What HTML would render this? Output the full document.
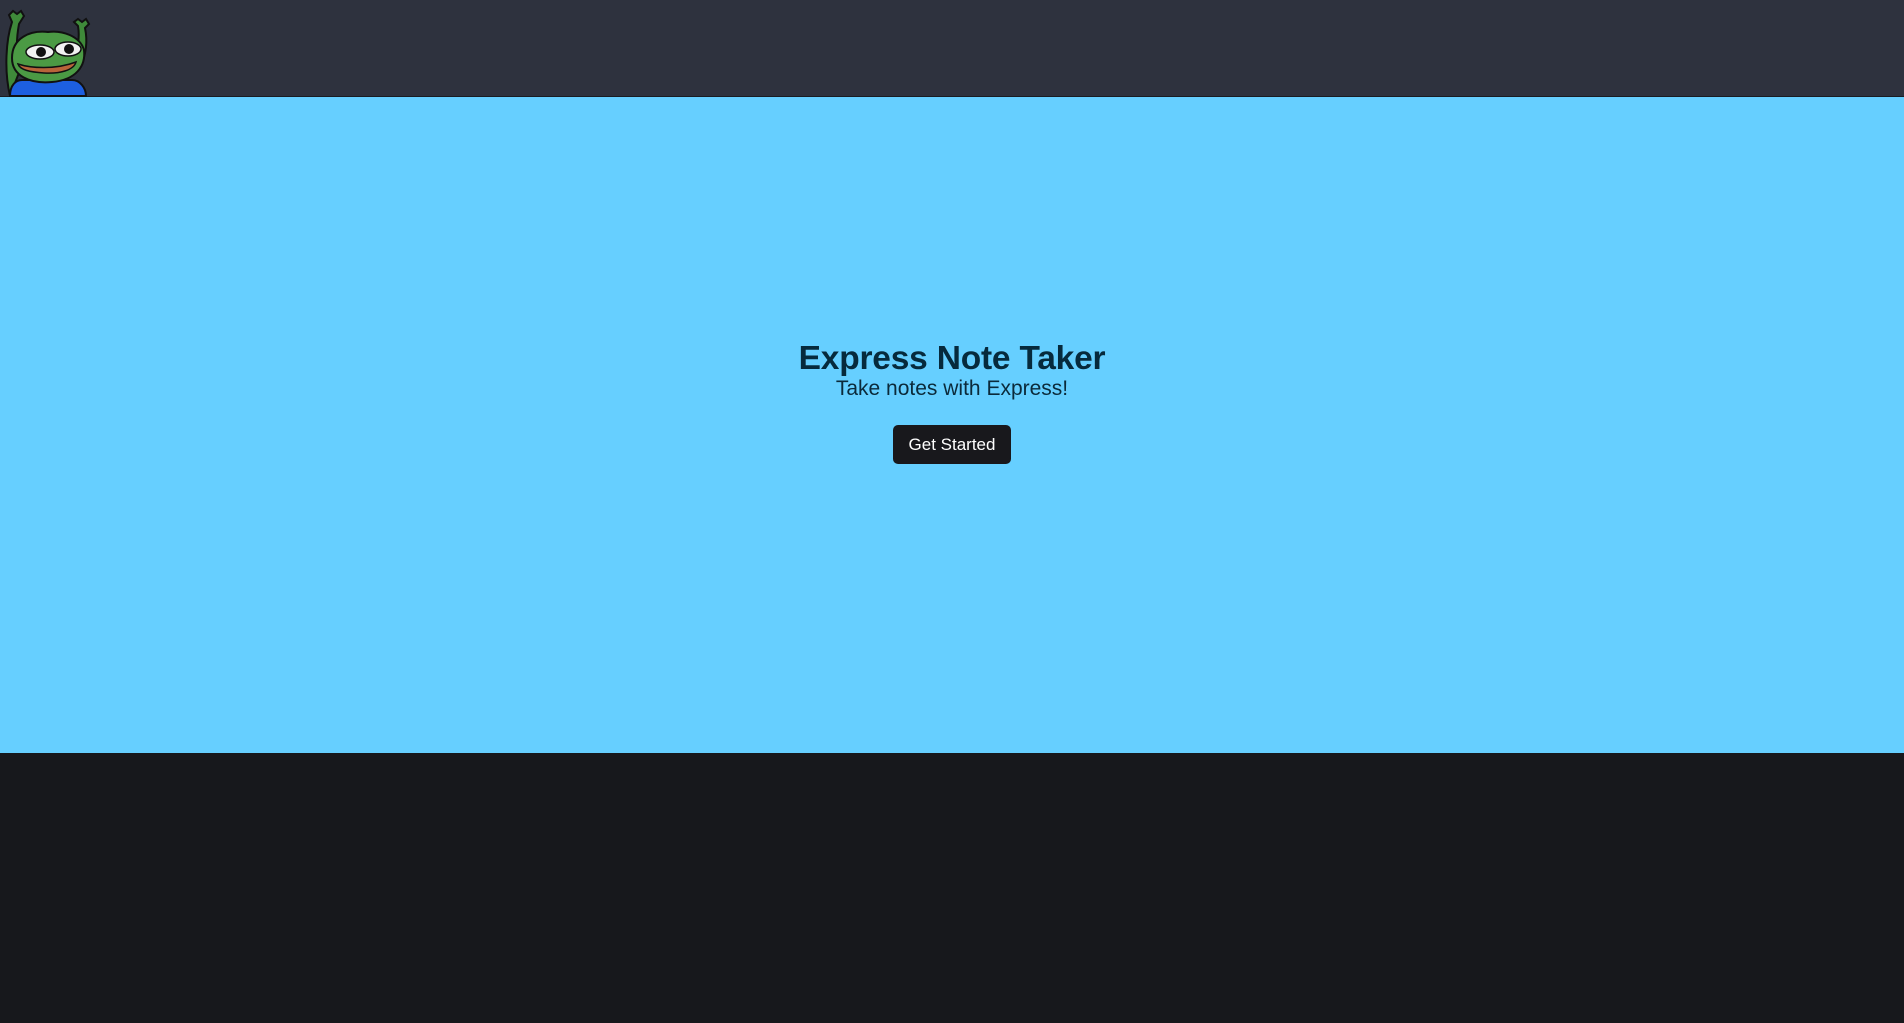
<!DOCTYPE html>
<html><head><meta charset="utf-8"><style>
html,body{margin:0;padding:0;width:1904px;height:1023px;overflow:hidden;background:#17181c;font-family:"Liberation Sans",sans-serif}
.hdr{position:absolute;left:0;top:0;width:1904px;height:96px;background:#2e323e;border-bottom:1px solid #1a1c22}
.hero{position:absolute;left:0;top:97px;width:1904px;height:656px;background:#66cfff}
h1{position:absolute;top:340px;left:0;width:1904px;margin:0;text-align:center;font-size:33.5px;font-weight:bold;color:#062a3c;letter-spacing:-0.2px}
.sub{position:absolute;top:377px;left:0;width:1904px;text-align:center;font-size:21px;color:#0b2a3a}
.btn{position:absolute;left:893px;top:425px;width:118px;height:39px;background:#18181c;border-radius:5px;color:#fff;font-size:17px;font-weight:500;line-height:40px;text-align:center}
</style></head><body>
<div class="hdr">
<svg width="100" height="97" viewBox="0 0 100 97" style="position:absolute;left:0;top:0">
<path d="M10,96 C4,70 6,40 12,22 L9,15 L13,11 L17,14 L21,11 L24,16 L19,24 C16,40 16,55 20,70 Z" fill="#3f8a3a" stroke="#111" stroke-width="2"/>
<path d="M72,60 C78,48 80,38 78,26 L74,22 L78,19 L82,22 L86,19 L89,24 L85,28 C88,42 86,55 80,68 Z" fill="#3f8a3a" stroke="#111" stroke-width="2"/>
<path d="M10,96 C10,85 16,80 22,80 L72,80 C80,80 86,88 86,96 Z" fill="#1d5fe0" stroke="#111" stroke-width="2"/>
<path d="M12,58 C12,38 30,30 48,32 C62,30 80,36 84,50 C86,66 76,80 52,82 C30,84 12,76 12,58 Z" fill="#4b9a44" stroke="#111" stroke-width="2"/>
<ellipse cx="40" cy="52" rx="14" ry="7" fill="#f2f2f2" stroke="#111" stroke-width="1.5"/>
<ellipse cx="68" cy="49" rx="13" ry="7" fill="#f2f2f2" stroke="#111" stroke-width="1.5"/>
<circle cx="41" cy="52" r="5" fill="#111"/><circle cx="69" cy="49" r="5" fill="#111"/>
<path d="M18,64 C30,68 55,70 76,62 C74,70 60,74 44,73 C30,72 20,70 18,64 Z" fill="#b8643a" stroke="#111" stroke-width="1.5"/>
</svg>
</div>
<div class="hero"></div>
<h1>Express Note Taker</h1>
<div class="sub">Take notes with Express!</div>
<div class="btn">Get Started</div>
</body></html>
